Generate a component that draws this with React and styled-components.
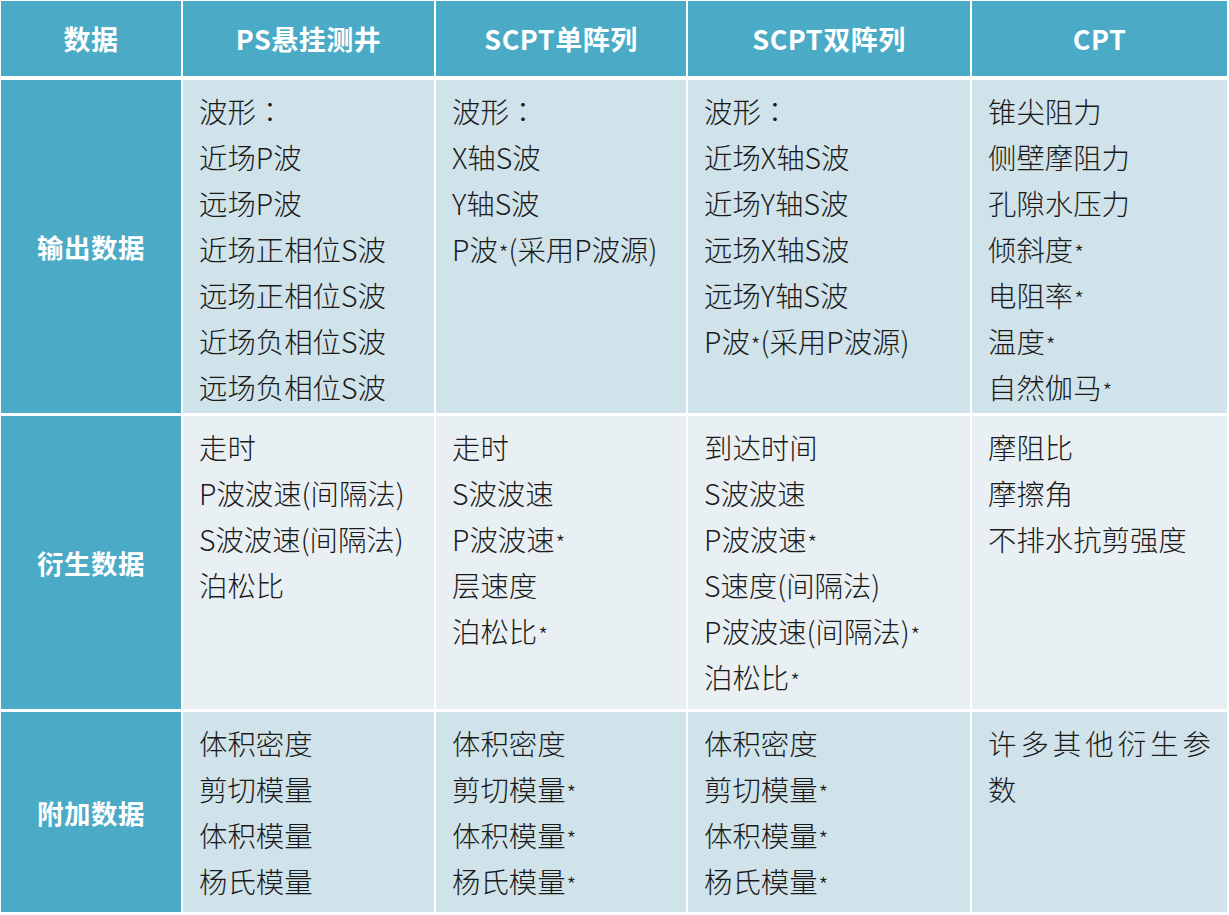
import React from "react";
import styled, { createGlobalStyle } from "styled-components";

const Global = createGlobalStyle`
  html, body { margin: 0; padding: 0; background: #ffffff; }
  body { font-family: "Noto Sans CJK SC", "Noto Sans", sans-serif; }
`;

const COLS = "180px 251px 250px 282px 255px";

const Table = styled.div`
  display: flex;
  flex-direction: column;
  gap: 3px;
  padding: 1px 0 0 1px;
  width: 1226px;
`;

const Row = styled.div`
  display: grid;
  grid-template-columns: ${COLS};
  grid-template-rows: ${(p) => p.$h}px;
  column-gap: 2px;
  margin-bottom: ${(p) => (p.$header ? 1 : 0)}px;
`;

const HeadCell = styled.div`
  background: #4babc6;
  color: #ffffff;
  font-weight: 700;
  font-size: 27px;
  display: flex;
  align-items: center;
  justify-content: center;
  letter-spacing: 0.5px;
`;

const LabelCell = styled(HeadCell)`
  font-size: 26.5px;
`;

const DataCell = styled.div`
  background: ${(p) => (p.$alt ? "#e9f0f4" : "#d0e2ea")};
  color: #1a1a1a;
  font-size: 28.4px;
  font-weight: 300;
  line-height: 46px;
  padding: 8px 16px 0 16px;
  text-align: justify;
  box-sizing: border-box;
  overflow: hidden;
`;

const Line = styled.div`
  min-height: 46px;
`;

const Star = styled.span`
  display: inline-block;
  font-size: 22px;
  line-height: 1;
  vertical-align: -1px;
  margin-left: 1px;
`;

const Colon = styled.span`
  font-family: "Noto Sans CJK JP", sans-serif;
`;

const header = ["数据", "PS悬挂测井", "SCPT单阵列", "SCPT双阵列", "CPT"];

const rows = [
  {
    label: "输出数据",
    h: 333,
    alt: false,
    cells: [
      ["波形：", "近场P波", "远场P波", "近场正相位S波", "远场正相位S波", "近场负相位S波", "远场负相位S波"],
      ["波形：", "X轴S波", "Y轴S波", "P波*(采用P波源)"],
      ["波形：", "近场X轴S波", "近场Y轴S波", "远场X轴S波", "远场Y轴S波", "P波*(采用P波源)"],
      ["锥尖阻力", "侧壁摩阻力", "孔隙水压力", "倾斜度*", "电阻率*", "温度*", "自然伽马*"],
    ],
  },
  {
    label: "衍生数据",
    h: 293,
    alt: true,
    cells: [
      ["走时", "P波波速(间隔法)", "S波波速(间隔法)", "泊松比"],
      ["走时", "S波波速", "P波波速*", "层速度", "泊松比*"],
      ["到达时间", "S波波速", "P波波速*", "S速度(间隔法)", "P波波速(间隔法)*", "泊松比*"],
      ["摩阻比", "摩擦角", "不排水抗剪强度"],
    ],
  },
  {
    label: "附加数据",
    h: 200,
    alt: false,
    cells: [
      ["体积密度", "剪切模量", "体积模量", "杨氏模量"],
      ["体积密度", "剪切模量*", "体积模量*", "杨氏模量*"],
      ["体积密度", "剪切模量*", "体积模量*", "杨氏模量*"],
      ["许多其他衍生参数"],
    ],
  },
];

function renderLine(text) {
  const parts = text.split(/([*：])/);
  return parts.map((p, i) => {
    if (p === "*") return <Star key={i}>*</Star>;
    if (p === "：") return <Colon key={i}>：</Colon>;
    return <React.Fragment key={i}>{p}</React.Fragment>;
  });
}

export default function App() {
  return (
    <>
      <Global />
      <Table>
        <Row $h={75} $header>
          {header.map((t) => (
            <HeadCell key={t}>{t}</HeadCell>
          ))}
        </Row>
        {rows.map((r) => (
          <Row key={r.label} $h={r.h}>
            <LabelCell>{r.label}</LabelCell>
            {r.cells.map((lines, i) => (
              <DataCell key={i} $alt={r.alt}>
                {lines.map((l, j) => (
                  <Line key={j}>{renderLine(l)}</Line>
                ))}
              </DataCell>
            ))}
          </Row>
        ))}
      </Table>
    </>
  );
}
